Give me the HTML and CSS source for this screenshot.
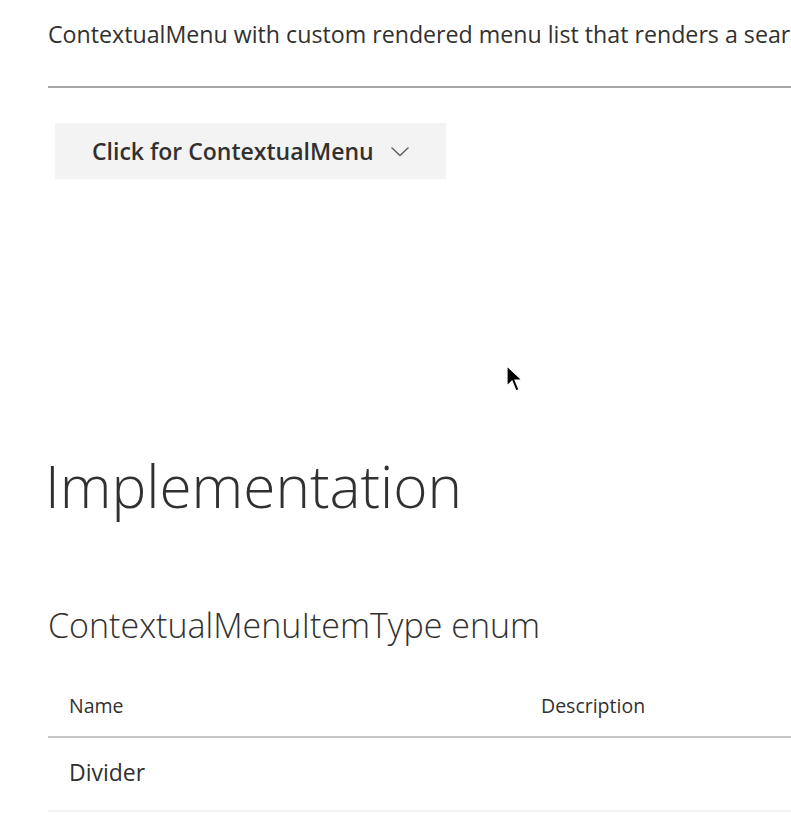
FILE: index.html
```html
<!DOCTYPE html>
<html>
<head>
<meta charset="utf-8">
<link rel="stylesheet" href="styles.css">
</head>
<body>
<div class="page">
  <p class="desc">ContextualMenu with custom rendered menu list that renders a search box to filter menu items.</p>
  <div class="rule"></div>
  <div class="demo">
    <button class="menu-btn" type="button">
      <span class="btn-label">Click for ContextualMenu</span>
      <svg class="chevron" width="20" height="12" viewBox="0 0 20 12"><path d="M1.5 1.5 L10 9.5 L18.5 1.5" fill="none" stroke="#605e5c" stroke-width="1.3"/></svg>
    </button>
  </div>
  <h1 class="title">Implementation</h1>
  <h2 class="subtitle">ContextualMenuItemType enum</h2>
  <table class="enum-table">
    <thead>
      <tr><th class="col-name">Name</th><th class="col-desc">Description</th></tr>
    </thead>
    <tbody>
      <tr><td class="col-name">Divider</td><td class="col-desc"></td></tr>
    </tbody>
  </table>
</div>
<svg class="cursor" width="18" height="30" viewBox="0 0 18 30"><path d="M1 1 L1 21 L6 16 L10 26 L13 24.5 L9 15 L16 15 Z" fill="#000" stroke="#fff" stroke-width="1.2"/></svg>
</body>
</html>
```
FILE: styles.css
```css
html, body {
  margin: 0;
  padding: 0;
  overflow: hidden;
  background: #ffffff;
}
body {
  font-family: "Open Sans", "Noto Sans", sans-serif;
  color: #323130;
  position: relative;
  height: 833px;
}
.page {
  width: 1300px;
  padding-left: 48px;
  box-sizing: border-box;
}
.desc {
  margin: 0;
  padding-top: 18px;
  font-size: 23.2px;
  line-height: 32px;
  white-space: nowrap;
}
.rule {
  margin-top: 36px;
  height: 2px;
  background: #a6a6a6;
}
.demo {
  padding: 35px 0 0 7px;
}
.menu-btn {
  display: flex;
  align-items: center;
  width: 391px;
  height: 56px;
  padding: 0 0 0 37px;
  border: none;
  background: #f3f3f3;
  font-family: inherit;
  font-size: 23px;
  font-weight: 600;
  color: #323130;
  box-sizing: border-box;
}
.chevron {
  margin-left: 16px;
  margin-top: 2px;
}
.title {
  margin: 266px 0 0 -3px;
  font-size: 58.5px;
  font-weight: 300;
  line-height: 80px;
}
.subtitle {
  margin: 78px 0 0 0;
  font-size: 34px;
  font-weight: 300;
  line-height: 44px;
}
.enum-table {
  margin-top: 38px;
  border-collapse: collapse;
  table-layout: fixed;
  width: 1200px;
}
.enum-table th {
  text-align: left;
  font-weight: 400;
  font-size: 19.5px;
  line-height: 26px;
  padding: 8px 0 17px 21px;
  border-bottom: 2px solid #c8c8c8;
}
.enum-table td {
  font-size: 23px;
  line-height: 30px;
  padding: 19px 0 23px 21px;
  border-bottom: 2px solid #f3f3f3;
}
.enum-table .col-name {
  width: 472px;
  box-sizing: border-box;
}
.cursor {
  position: absolute;
  left: 506px;
  top: 365px;
}
```
